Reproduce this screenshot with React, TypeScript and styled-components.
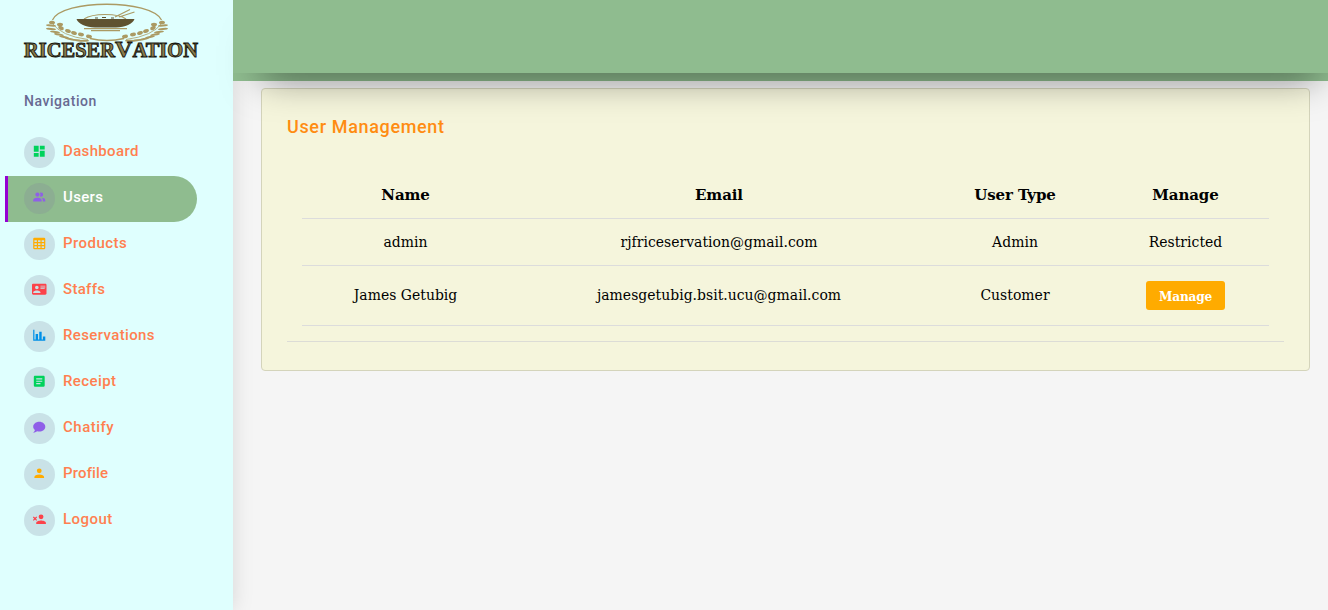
import React from 'react';
import styled, { createGlobalStyle } from 'styled-components';

const Global = createGlobalStyle`
  * { box-sizing: border-box; }
  body { margin: 0; background: #f5f5f5; overflow: hidden; }
`;
const Page = styled.div`
  display: flex;
  height: 610px;
  font-family: Roboto, "Liberation Sans", sans-serif;
`;
const Sidebar = styled.aside`
  flex: 0 0 233px;
  height: 610px;
  background: #dffffe;
  box-shadow: 0 0 20px rgba(0, 0, 0, 0.13);
`;
const Brand = styled.svg`
  display: block;
  width: 233px;
  height: 64px;
`;
const NavTitle = styled.div`
  margin: 27px 0 19px 24px;
  height: 20px;
  font-size: 14px;
  line-height: 20px;
  font-weight: 500;
  letter-spacing: 0.55px;
  color: #686a92;
`;
const NavList = styled.nav`
  display: flex;
  flex-direction: column;
`;
const NavItem = styled.a<{ $active?: boolean }>`
  display: flex;
  align-items: flex-start;
  width: 192px;
  height: 46px;
  margin-left: 5px;
  padding: 7px 0 0 16px;
  border-left: 3px solid ${p => (p.$active ? '#9400d3' : 'transparent')};
  border-radius: 0 23px 23px 0;
  background: ${p => (p.$active ? '#8fbc8f' : 'transparent')};
  color: ${p => (p.$active ? '#fff' : '#ff7f50')};
`;
const IconCircle = styled.span<{ $color: string }>`
  display: flex;
  justify-content: center;
  width: 31px;
  height: 31px;
  padding-top: 7px;
  border-radius: 50%;
  background: rgba(131, 131, 156, 0.23);
  color: ${p => p.$color};
`;
const Icon = styled.svg`
  width: 14.5px;
  height: 14.5px;
  fill: currentColor;
`;
const NavLabel = styled.span<{ $ls: number }>`
  margin-left: 8px;
  font-size: 15px;
  line-height: 28px;
  font-weight: 500;
  letter-spacing: ${p => p.$ls}px;
`;
const Main = styled.main`
  flex: 1;
  min-width: 0;
`;
const HeaderBand = styled.header`
  height: 81px;
  background: #8fbc8f;
`;
const TopBar = styled.div`
  position: relative;
  height: 73px;
  background: #8fbc8f;
  box-shadow: 9px 24px 38px -20px rgba(0, 0, 0, 0.52);
`;
const Card = styled.section`
  margin: 7px 18px 0 28px;
  height: 283px;
  padding: 25px;
  border: 1px solid #d4d4bb;
  border-radius: 4px;
  background: #f5f5dc;
`;
const CardTitle = styled.h4`
  margin: 0;
  height: 26px;
  font-size: 18px;
  line-height: 26px;
  font-weight: 500;
  letter-spacing: 0.65px;
  color: #ff8c12;
`;
const TableWrap = styled.div`
  height: 202px;
  padding: 32px 15px 0;
  border-bottom: 1px solid #dcdcd6;
`;
const Row = styled.div<{ $height: number; $head?: boolean }>`
  display: grid;
  grid-template-columns: 207px 420px 172px 169px;
  align-items: center;
  justify-items: center;
  height: ${p => p.$height}px;
  border-bottom: 1px solid #dcdcdc;
  font-family: "DejaVu Serif", serif;
  font-stretch: ${p => (p.$head ? 'normal' : 'condensed')};
  font-size: ${p => (p.$head ? 15 : 15.5)}px;
  font-weight: ${p => (p.$head ? 700 : 400)};
  letter-spacing: ${p => (p.$head ? -0.1 : 0.03)}px;
  color: #000;
`;
const Cell = styled.span`
  white-space: nowrap;
  padding-bottom: 1px;
`;
const ManageButton = styled.button`
  width: 79px;
  height: 29px;
  padding: 0;
  border: 0;
  border-radius: 3px;
  background: #ffab00;
  color: #fff;
  font: inherit;
  font-size: 13.5px;
  font-weight: 700;
  letter-spacing: -0.2px;
`;

const items = [
  { label: 'Dashboard', color: '#00d25b', ls: 0.35, d: 'M13,3V9H21V3M13,21H21V11H13M3,21H11V15H3M3,13H11V3H3V13Z' },
  { label: 'Users', color: '#8f5fe8', ls: 0.35, active: true, d: 'M16 17V19H2V17S2 13 9 13 16 17 16 17M12.5 7.5A3.5 3.5 0 1 0 9 11A3.5 3.5 0 0 0 12.5 7.5M15.94 13A5.32 5.32 0 0 1 18 17V19H22V17S22 13.37 15.94 13M15 4A3.39 3.39 0 0 0 13.07 4.59A5 5 0 0 1 13.07 10.41A3.39 3.39 0 0 0 15 11A3.5 3.5 0 0 0 15 4Z' },
  { label: 'Products', color: '#ffab00', ls: 0.45, d: 'M4,3H20A2,2 0 0,1 22,5V20A2,2 0 0,1 20,22H4A2,2 0 0,1 2,20V5A2,2 0 0,1 4,3M4,7V10H8V7H4M10,7V10H14V7H10M20,10V7H16V10H20M4,12V15H8V12H4M4,20H8V17H4V20M10,12V15H14V12H10M10,20H14V17H10V20M20,20V17H16V20H20M20,12H16V15H20V12Z' },
  { label: 'Staffs', color: '#fc424a', ls: 0.3, d: 'M2,3H22C23.05,3 24,3.95 24,5V19C24,20.05 23.05,21 22,21H2C0.95,21 0,20.05 0,19V5C0,3.95 0.95,3 2,3M14,6V7H22V6H14M14,8V9H21.5L22,9V8H14M14,10V11H21V10H14M8,13.91C6,13.91 2,15 2,17V18H14V17C14,15 10,13.91 8,13.91M8,6A3,3 0 0,0 5,9A3,3 0 0,0 8,12A3,3 0 0,0 11,9A3,3 0 0,0 8,6Z' },
  { label: 'Reservations', color: '#0090e7', ls: 0.37, d: 'M22,21H2V3H4V19H6V10H10V19H12V6H16V19H18V14H22V21Z' },
  { label: 'Receipt', color: '#00d25b', ls: 0.4, d: 'M14,17H7V15H14M17,13H7V11H17M17,9H7V7H17M19,3H5C3.89,3 3,3.89 3,5V19A2,2 0 0,0 5,21H19A2,2 0 0,0 21,19V5C21,3.89 20.1,3 19,3Z' },
  { label: 'Chatify', color: '#8f5fe8', ls: 0.5, d: 'M12,3C17.5,3 22,6.58 22,11C22,15.42 17.5,19 12,19C10.76,19 9.57,18.82 8.47,18.5C5.55,21 2,21 2,21C4.33,18.67 4.7,17.1 4.75,16.5C3.05,15.07 2,13.13 2,11C2,6.58 6.5,3 12,3Z' },
  { label: 'Profile', color: '#ffab00', ls: 0.15, d: 'M12,4A4,4 0 0,1 16,8A4,4 0 0,1 12,12A4,4 0 0,1 8,8A4,4 0 0,1 12,4M12,14C16.42,14 20,15.79 20,18V20H4V18C4,15.79 7.58,14 12,14Z' },
  { label: 'Logout', color: '#fc424a', ls: 0.45, d: 'M15,14C12.33,14 7,15.33 7,18V20H23V18C23,15.33 17.67,14 15,14M15,12A4,4 0 0,0 19,8A4,4 0 0,0 15,4A4,4 0 0,0 11,8A4,4 0 0,0 15,12M5,9.59L7.12,7.46L8.54,8.88L6.41,11L8.54,13.12L7.12,14.54L5,12.41L2.88,14.54L1.46,13.12L3.59,11L1.46,8.88L2.88,7.46L5,9.59Z' },
];

const grains = [[52, 22.5, 5], [60, 24.5, 0], [61, 28, 25], [68, 31, 20], [74, 33, 20], [81, 34.5, 10], [89, 36.5, 10]];
const stalks = [[51, 25.5, 5], [51, 29, 5], [55, 32, 8], [59, 34.5, 10], [64, 37, 12], [70, 39, 12], [77, 40.2, 8], [84, 40.8, 0]];

function Wheat() {
  return (
    <g fill="#ab9a63">
      {grains.map(([x, y, r]) => (
        <ellipse key={`${x}-${y}`} cx={x} cy={y} rx="3" ry="1.8" transform={`rotate(${r} ${x} ${y})`} />
      ))}
      {stalks.map(([x, y, r]) => (
        <ellipse key={`${x}-${y}`} cx={x} cy={y} rx="5" ry="1.05" transform={`rotate(${r} ${x} ${y})`} />
      ))}
      <path d="M52 23Q61 36 88 39.5" fill="none" stroke="#ab9a63" strokeWidth=".8" />
    </g>
  );
}

function Logo() {
  return (
    <Brand viewBox="0 0 233 64">
      <path d="M52.500 20C62 -1 151 -1 161.500 20M90 38.500Q107 42.500 124 38.500" fill="none" stroke="#ab9a63" strokeWidth="1.3" />
      <Wheat />
      <g transform="translate(214 0) scale(-1 1)"><Wheat /></g>
      <path d="M84 19Q91 14.500 105 14.500Q120 14.500 126 19M115 17L130 9.500M119 17L134.500 12" fill="none" stroke="#ab9a63" strokeWidth="1.2" />
      <path d="M95 18h3M102 17.500h4M111 18h3" stroke="#5f5230" strokeWidth="1.2" />
      <path d="M76.500 19H134.500C133 23.500 125 27.500 116 27.500H95C86 27.500 78 23.500 76.500 19Z" fill="#5f5230" />
      <path d="M84 28.600H127M91 30.600H120" stroke="#ab9a63" strokeWidth="1.2" />
      <text
        x="24" y="57" textLength="174" lengthAdjust="spacingAndGlyphs"
        fontFamily="Liberation Serif, serif" fontWeight="700" fontSize="20.5"
        stroke="#16160f" strokeWidth=".9" fill="#8c7c4a"
      >
        RICESER<tspan fontSize="24">V</tspan>ATION
      </text>
    </Brand>
  );
}

export default function App() {
  return (
    <Page>
      <Global />
      <Sidebar>
        <Logo />
        <NavTitle>Navigation</NavTitle>
        <NavList>
          {items.map(i => (
            <NavItem key={i.label} $active={i.active}>
              <IconCircle $color={i.color}><Icon viewBox="0 0 24 24"><path d={i.d} /></Icon></IconCircle>
              <NavLabel $ls={i.ls}>{i.label}</NavLabel>
            </NavItem>
          ))}
        </NavList>
      </Sidebar>
      <Main>
        <HeaderBand><TopBar /></HeaderBand>
        <Card>
          <CardTitle>User Management</CardTitle>
          <TableWrap>
            <Row $height={47} $head>
              <Cell>Name</Cell><Cell>Email</Cell><Cell>User Type</Cell><Cell>Manage</Cell>
            </Row>
            <Row $height={47}>
              <Cell>admin</Cell><Cell>rjfriceservation@gmail.com</Cell><Cell>Admin</Cell><Cell>Restricted</Cell>
            </Row>
            <Row $height={60}>
              <Cell>James Getubig</Cell><Cell>jamesgetubig.bsit.ucu@gmail.com</Cell><Cell>Customer</Cell>
              <ManageButton>Manage</ManageButton>
            </Row>
          </TableWrap>
        </Card>
      </Main>
    </Page>
  );
}
